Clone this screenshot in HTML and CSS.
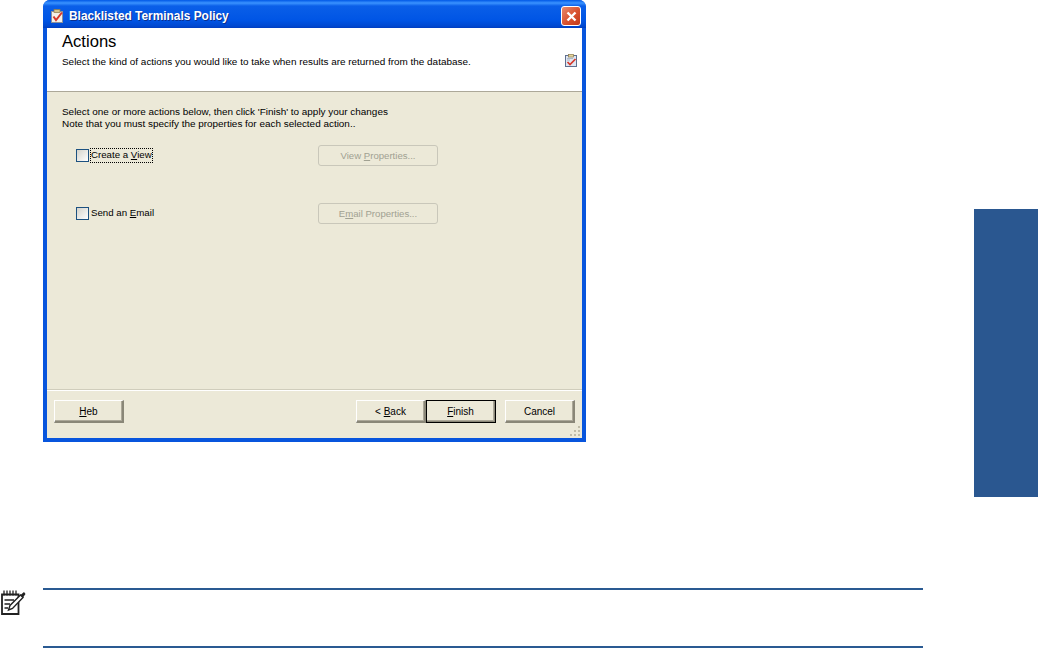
FILE: index.html
```html
<!DOCTYPE html>
<html lang="en">
<head>
    <meta charset="UTF-8">
    <title>Blacklisted Terminals Policy</title>
    <link rel="stylesheet" href="styles.css">
</head>
<body>
    <div class="page">
        <div class="main">
            <div class="window">
                <div class="titlebar">
                    <svg class="title-icon" width="14" height="14" viewBox="0 0 14 14">
                        <rect x="1.5" y="2.5" width="11" height="11" fill="#f4f1e8" stroke="#8a8f9c"/>
                        <rect x="4" y="0.5" width="6" height="3" fill="#d8c48a" stroke="#8d7a4a" stroke-width="0.7"/>
                        <path d="M3.5 7.5 L6 11 L12 3.5" fill="none" stroke="#d8382a" stroke-width="2"/>
                    </svg>
                    <span class="title-text">Blacklisted Terminals Policy</span>
                    <div class="close-btn">
                        <svg width="13" height="13" viewBox="0 0 13 13">
                            <path d="M2.5 2.5 L10.5 10.5 M10.5 2.5 L2.5 10.5" stroke="#fff" stroke-width="2.4"/>
                        </svg>
                    </div>
                </div>
                <div class="client">
                    <div class="header">
                        <div class="header-text">
                            <div class="heading">Actions</div>
                            <div class="subheading">Select the kind of actions you would like to take when results are returned from the database.</div>
                        </div>
                        <svg class="header-icon" width="12" height="13" viewBox="0 0 12 13">
                            <rect x="0.5" y="1.5" width="11" height="11" fill="#dfe6f2" stroke="#5f6f8f"/>
                            <rect x="3.5" y="0.5" width="5" height="2.5" fill="#e6d79f" stroke="#8d7a4a" stroke-width="0.7"/>
                            <path d="M2.5 8 L5 10.5 L10.5 5" fill="none" stroke="#d8382a" stroke-width="1.7"/>
                            <path d="M2 4.5 H8 M2 6 H5" stroke="#9aa3b5" stroke-width="0.7"/>
                        </svg>
                    </div>
                    <div class="content">
                        <p class="intro">Select one or more actions below, then click 'Finish' to apply your changes<br>Note that you must specify the properties for each selected action..</p>
                        <div class="action-row first">
                            <div class="check-wrap">
                                <span class="checkbox"></span>
                                <span class="check-label focused">Create a <u>V</u>iew</span>
                            </div>
                            <div class="btn-prop">View <u>P</u>roperties...</div>
                        </div>
                        <div class="action-row second">
                            <div class="check-wrap">
                                <span class="checkbox"></span>
                                <span class="check-label">Send an <u>E</u>mail</span>
                            </div>
                            <div class="btn-prop">E<u>m</u>ail Properties...</div>
                        </div>
                    </div>
                    <div class="footer">
                        <div class="btn"><u>H</u>eb</div>
                        <div class="footer-right">
                            <div class="nav-group">
                                <div class="btn">&lt; <u>B</u>ack</div>
                                <div class="btn default"><u>F</u>inish</div>
                            </div>
                            <div class="btn">Cancel</div>
                        </div>
                        <svg class="grip" width="12" height="12" viewBox="0 0 12 12">
                            <path d="M9 1h2v2H9z M5 5h2v2H5z M9 5h2v2H9z M1 9h2v2H1z M5 9h2v2H5z M9 9h2v2H9z" fill="#c0bca8"/>
                        </svg>
                    </div>
                </div>
            </div>
            <div class="note">
                <svg class="note-icon" width="26" height="27" viewBox="0 0 26 27">
                    <path d="M2 5.5 H18.5 V25 H2 Z" fill="#fff" stroke="#222" stroke-width="1.8"/>
                    <path d="M4 1.5v5 M7 1.5v5 M10 1.5v5 M13 1.5v5 M16 1.5v5" stroke="#222" stroke-width="1.3"/>
                    <path d="M4.5 11 H14 M4.5 15 H10 M4.5 19 H8" stroke="#222" stroke-width="1.4"/>
                    <path d="M8.5 21 L10 16.5 L20.5 6 L23 8.5 L12.5 19.5 Z" fill="#fff" stroke="#222" stroke-width="1.4"/>
                    <path d="M20.5 6 L24 3 L25.5 5 L23 8.5 Z" fill="#222"/>
                </svg>
            </div>
        </div>
        <div class="side">
            <div class="side-tab"></div>
        </div>
    </div>
</body>
</html>
```

FILE: styles.css
```css
* {
    box-sizing: border-box;
}
html, body {
    margin: 0;
    padding: 0;
    background-color: #fff;
}
body {
    font-family: "Liberation Sans", Arial, sans-serif;
    height: 648px;
    overflow: hidden;
}
.page {
    display: flex;
    justify-content: space-between;
    height: 648px;
}
.main {
    width: 923px;
    padding-left: 43px;
}
.window {
    width: 543px;
    height: 442px;
    background: #0855dd;
    border-radius: 7px 7px 0 0;
    padding: 0 4px 4px 4px;
    display: flex;
    flex-direction: column;
}
.titlebar {
    height: 28px;
    margin: 0 -4px;
    padding: 4px 5px 0 7px;
    display: flex;
    align-items: center;
    border-radius: 7px 7px 0 0;
    background: linear-gradient(to bottom, #0058e6 0, #3a93ff 3px, #0a5fe8 6px, #0055e5 20px, #0048d0 26px, #003dc0 28px);
}
.title-icon {
    margin-right: 5px;
}
.title-text {
    color: #fff;
    font-size: 11.9px;
    font-weight: bold;
    text-shadow: 1px 1px 0 #0a2f8f;
}
.close-btn {
    margin-left: auto;
    width: 20px;
    height: 20px;
    border: 1px solid #fff;
    border-radius: 3px;
    background: linear-gradient(135deg, #e88a6c, #d8512f 55%, #c23a1c);
    display: flex;
    align-items: center;
    justify-content: center;
}
.client {
    flex: 1;
    display: flex;
    flex-direction: column;
    background-color: #ece9d8;
    color: #000;
    font-size: 10px;
}
.header {
    height: 64px;
    background-color: #fff;
    border-bottom: 1px solid #aca899;
    padding: 5px 5px 0 15px;
    display: flex;
    justify-content: space-between;
}
.heading {
    font-size: 16.6px;
    line-height: 18px;
}
.subheading {
    margin-top: 5px;
    font-size: 9.93px;
    line-height: 12px;
}
.header-icon {
    margin-top: 21px;
    display: block;
}
.content {
    flex: 1;
    padding: 14px 0 0 15px;
    border-bottom: 1px solid #d0cdbc;
}
.intro {
    margin: 0;
    font-size: 9.93px;
    line-height: 12px;
}
.action-row {
    display: flex;
    align-items: center;
    height: 21px;
}
.action-row.first {
    margin-top: 15px;
}
.action-row.second {
    margin-top: 37px;
}
.check-wrap {
    width: 256px;
    padding-left: 14px;
    display: flex;
    align-items: center;
}
.checkbox {
    width: 13px;
    height: 13px;
    border: 1px solid #1c5180;
    background: linear-gradient(135deg, #d4d3cb, #fff);
}
.check-label {
    margin-left: 1px;
    padding: 0 0 1px 0;
    border: 1px solid transparent;
    font-size: 9.7px;
    line-height: 12px;
}
.check-label.focused {
    border: 1px dotted #000;
}
.btn-prop {
    width: 120px;
    height: 21px;
    border: 1px solid #c9c7ba;
    border-radius: 3px;
    color: #a1a192;
    font-size: 9.6px;
    display: flex;
    align-items: center;
    justify-content: center;
    white-space: pre;
}
.footer {
    position: relative;
    height: 48px;
    border-top: 1px solid #fff;
    padding: 9px 7px 0 7px;
    display: flex;
    justify-content: space-between;
    align-items: flex-start;
}
.footer-right {
    display: flex;
    gap: 9px;
}
.nav-group {
    display: flex;
}
.btn {
    width: 70px;
    height: 23px;
    background-color: #ece9d8;
    border-top: 1px solid #fff;
    border-left: 1px solid #fff;
    border-right: 2px solid #8a8778;
    border-bottom: 2px solid #8a8778;
    box-shadow: inset -1px -1px 0 #aca899;
    display: flex;
    align-items: center;
    justify-content: center;
    font-size: 10px;
    white-space: pre;
}
.btn.default {
    outline: 1px solid #000;
    outline-offset: -1px;
}
.grip {
    position: absolute;
    right: 1px;
    bottom: 1px;
}
.note {
    margin-top: 146px;
    margin-left: -43px;
    height: 60px;
    position: relative;
}
.note::before {
    content: "";
    position: absolute;
    left: 43px;
    right: 0;
    top: 0;
    bottom: 0;
    border-top: 2px solid #2a5a92;
    border-bottom: 2px solid #2a5a92;
}
.note-icon {
    display: block;
    position: absolute;
    left: 0;
    top: 1px;
}
.side {
    width: 64px;
    padding-top: 209px;
}
.side-tab {
    height: 288px;
    background-color: #2a5790;
}
```
